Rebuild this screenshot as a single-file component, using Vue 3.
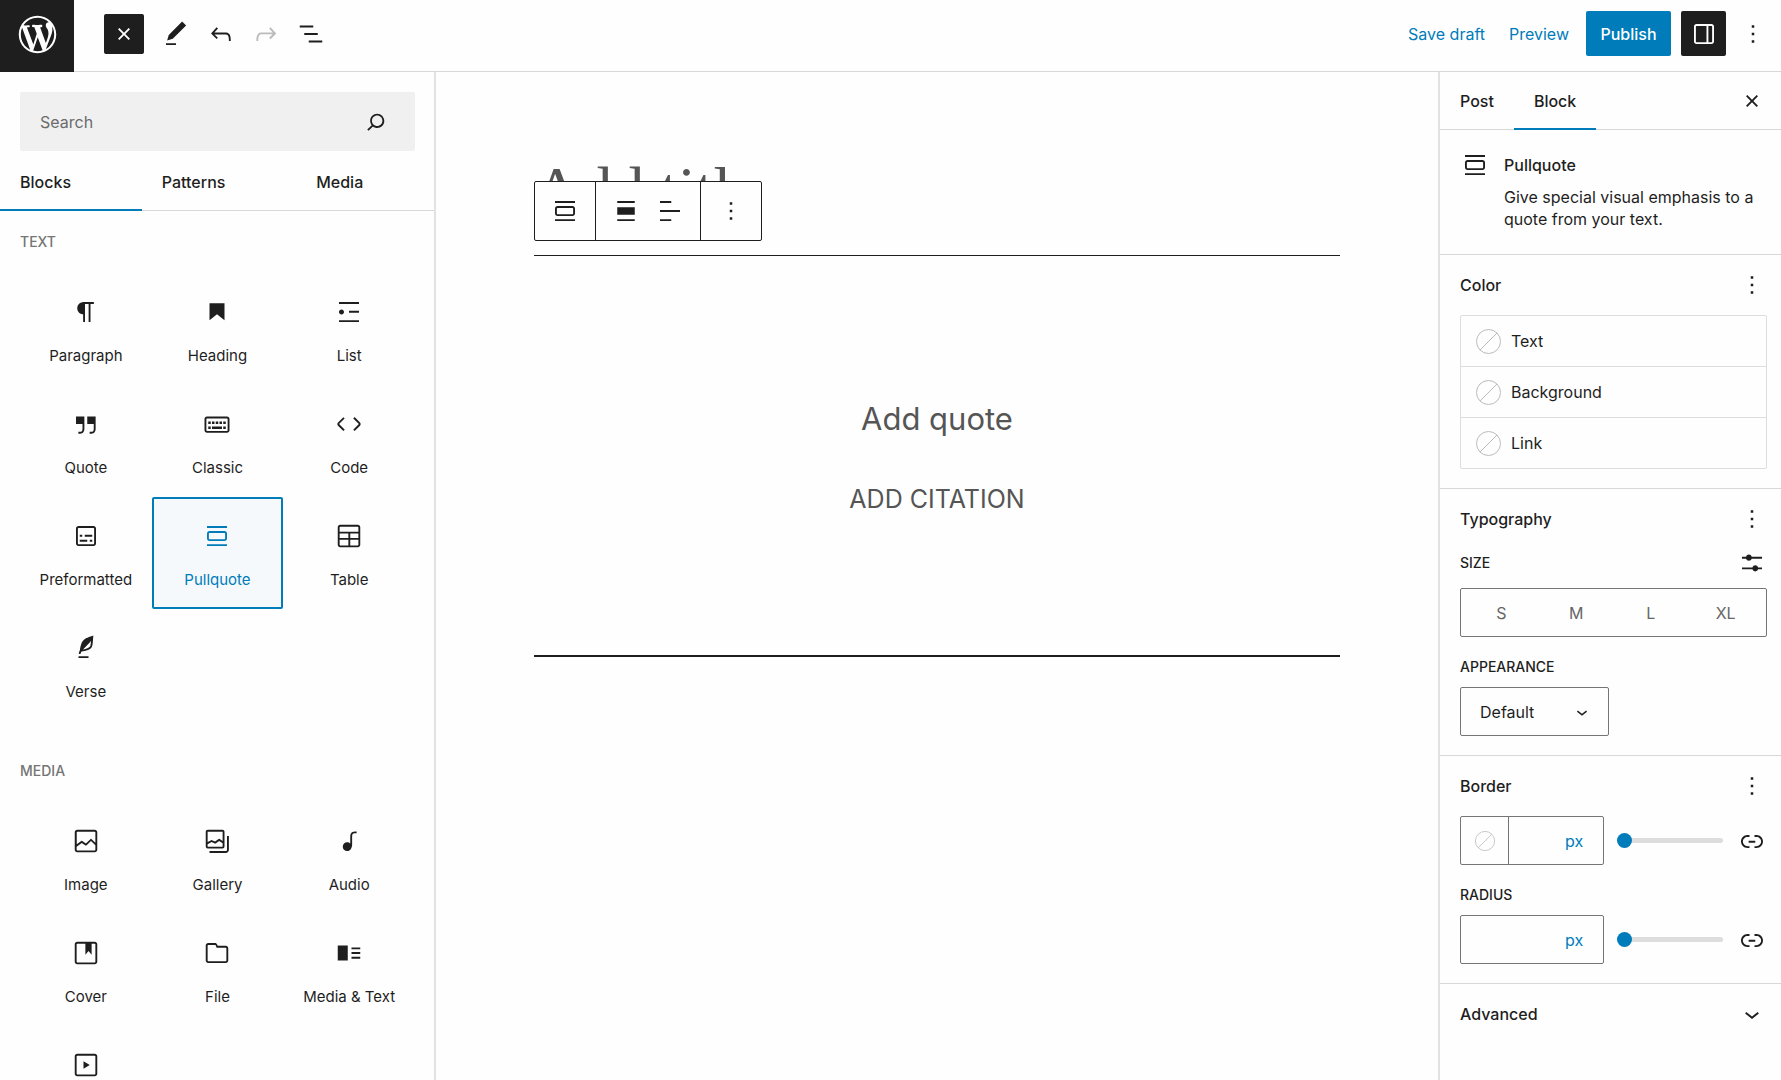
<script setup>
import { ref } from 'vue'

const icons = {
  wordpress: 'M20 10c0-5.51-4.49-10-10-10C4.48 0 0 4.49 0 10c0 5.52 4.48 10 10 10 5.51 0 10-4.48 10-10zM7.78 15.37L4.37 6.22c.55-.02 1.17-.08 1.17-.08.5-.06.44-1.13-.06-1.11 0 0-1.45.11-2.37.11-.18 0-.37 0-.58-.01C4.12 2.69 6.87 1.11 10 1.11c2.33 0 4.45.87 6.05 2.34-.68-.11-1.65.39-1.65 1.58 0 .74.45 1.36.9 2.1.35.61.55 1.36.55 2.46 0 1.49-1.4 5-1.4 5l-3.03-8.37c.54-.02.82-.17.82-.17.5-.05.44-1.25-.06-1.22 0 0-1.44.12-2.38.12-.87 0-2.33-.12-2.33-.12-.5-.03-.56 1.2-.06 1.22l.92.08 1.26 3.41zM17.41 10c.24-.64.74-1.87.43-4.25.7 1.29 1.05 2.71 1.05 4.25 0 3.29-1.73 6.24-4.4 7.78.97-2.59 1.94-5.2 2.92-7.78zM6.1 18.09C3.12 16.65 1.11 13.53 1.11 10c0-1.3.23-2.48.72-3.59C3.25 10.3 4.67 14.2 6.1 18.09zm4.03-6.63l2.58 6.98c-.86.29-1.76.45-2.71.45-.79 0-1.57-.11-2.29-.33.81-2.38 1.62-4.74 2.42-7.1z',
  close: 'M12 13.06l3.712 3.713 1.061-1.06L13.061 12l3.712-3.712-1.06-1.06L12 10.938 8.288 7.227l-1.061 1.06L10.939 12l-3.712 3.712 1.06 1.061L12 13.061z',
  edit: 'M20.1 5.1L16.9 2 6.2 12.7l-1.3 4.4 4.5-1.3L20.1 5.1zM4 20.8h8v-1.5H4v1.5z',
  undo: 'M18.3 11.7c-.6-.6-1.4-.9-2.3-.9H6.7l2.9-3.3-1.1-1-4.5 5L8.5 16l1-1-2.7-2.7H16c.5 0 .9.2 1.3.5 1 1 1 3.4 1 4.5v.3h1.5v-.2c0-1.5 0-4.3-1.5-5.7z',
  redo: 'M15.6 6.5l-1.1 1 2.9 3.3H8c-.9 0-1.7.3-2.3.9-1.4 1.5-1.4 4.2-1.4 5.6v.2h1.5v-.3c0-1.1 0-3.5 1-4.5.3-.3.7-.5 1.3-.5h9.2L14.5 15l1.1 1.1 4.6-4.6-4.6-5z',
  listView: 'M13.8 5.2H3v1.5h10.8V5.2zm-3.6 12v1.5H21v-1.5H10.2zm7.2-6H6.6v1.5h10.8v-1.5z',
  drawer: 'M18 4H6c-1.1 0-2 .9-2 2v12c0 1.1.9 2 2 2h12c1.1 0 2-.9 2-2V6c0-1.1-.9-2-2-2zm-4 14.5H6c-.3 0-.5-.2-.5-.5V6c0-.3.2-.5.5-.5h8v13zm4.5-.5c0 .3-.2.5-.5.5h-2.5v-13H18c.3 0 .5.2.5.5v12z',
  more: 'M13 19h-2v-2h2v2zm0-6h-2v-2h2v2zm0-6h-2V5h2v2z',
  search: 'M13 5c-3.3 0-6 2.7-6 6 0 1.4.5 2.7 1.3 3.7l-3.8 3.8 1.1 1.1 3.8-3.8c1 .8 2.3 1.3 3.7 1.3 3.3 0 6-2.7 6-6S16.3 5 13 5zm0 10.5c-2.5 0-4.5-2-4.5-4.5s2-4.5 4.5-4.5 4.5 2 4.5 4.5-2 4.5-4.5 4.5z',
  paragraph: 'M18.3 4H9.9v-.1l-.9.2c-2.3.4-4 2.4-4 4.8s1.7 4.4 4 4.8l.7.1V20h1.5V5.5h2.9V20h1.5V5.5h2.7V4z',
  heading: 'M6 5v13.6l6-4.8 6 4.8V5H6z',
  list: 'M4 4v1.5h16V4H4zm8 8.5h8V11h-8v1.5zM4 20h16v-1.5H4V20zm4-8c0-1.1-.9-2-2-2s-2 .9-2 2 .9 2 2 2 2-.9 2-2z',
  quote: 'M13 6v6h5.2v4c0 .8-.2 1.4-.5 1.7-.6.6-1.6.6-2.5.5h-.3v1.5h.5c1 0 2.3-.1 3.3-1 .6-.6 1-1.6 1-2.8V6H13zm-9 6h5.2v4c0 .8-.2 1.4-.5 1.7-.6.6-1.6.6-2.5.5h-.3v1.5h.5c1 0 2.3-.1 3.3-1 .6-.6 1-1.6 1-2.8V6H4v6z',
  classic: 'M20 6H4c-1.1 0-2 .9-2 2v9c0 1.1.9 2 2 2h16c1.1 0 2-.9 2-2V8c0-1.1-.9-2-2-2zm.5 11c0 .3-.2.5-.5.5H4c-.3 0-.5-.2-.5-.5V8c0-.3.2-.5.5-.5h16c.3 0 .5.2.5.5v9zM10 10H8v2h2v-2zm-5 2h2v-2H5v2zm8-2h-2v2h2v-2zm-5 6h8v-2H8v2zm6-4h2v-2h-2v2zm3 0h2v-2h-2v2zm0 4h2v-2h-2v2zM5 16h2v-2H5v2z',
  code: 'M20.8 10.7l-4.3-4.3-1.1 1.1 4.3 4.3c.1.1.1.3 0 .4l-4.3 4.3 1.1 1.1 4.3-4.3c.7-.8.7-1.9 0-2.6zM4.2 11.8l4.3-4.3-1-1-4.3 4.3c-.7.7-.7 1.8 0 2.5l4.3 4.3 1.1-1.1-4.3-4.3c-.2-.1-.2-.3-.1-.4z',
  preformatted: 'M18 4H6c-1.1 0-2 .9-2 2v12c0 1.1.9 2 2 2h12c1.1 0 2-.9 2-2V6c0-1.1-.9-2-2-2zm.5 14c0 .3-.2.5-.5.5H6c-.3 0-.5-.2-.5-.5V6c0-.3.2-.5.5-.5h12c.3 0 .5.2.5.5v12zM7 16.5h6V15H7v1.5zm4-4h6V11h-6v1.5zM9 11H7v1.5h2V11zm6 5.5h2V15h-2v1.5z',
  pullquote: 'M18 8H6c-1.1 0-2 .9-2 2v4c0 1.1.9 2 2 2h12c1.1 0 2-.9 2-2v-4c0-1.1-.9-2-2-2zm.5 6c0 .3-.2.5-.5.5H6c-.3 0-.5-.2-.5-.5v-4c0-.3.2-.5.5-.5h12c.3 0 .5.2.5.5v4zM4 4v1.5h16V4H4zm0 16h16v-1.5H4V20z',
  table: 'M19 3H5c-1.1 0-2 .9-2 2v14c0 1.1.9 2 2 2h14c1.1 0 2-.9 2-2V5c0-1.1-.9-2-2-2zM5 4.5h14c.3 0 .5.2.5.5v3.5h-15V5c0-.3.2-.5.5-.5zm8 5.5h6.5v3.5H13V10zm-1.5 3.5h-7V10h7v3.5zm-7 5.5v-4h7v4.5H5c-.3 0-.5-.2-.5-.5zm14.5.5h-6V15h6.5v4c0 .3-.2.5-.5.5z',
  verse: 'M17.8 2l-.9.3c-.1 0-3.6 1-5.2 2.1C10 5.5 9.3 6.5 8.9 7.1c-.6.9-1.7 4.7-1.7 6.3l-.9 2.3c-.2.4 0 .8.4 1 .1 0 .2.1.3.1.3 0 .6-.2.7-.5l.6-1.5c.3 0 .7-.1 1.2-.2.7-.1 1.4-.3 2.2-.5.8-.2 1.6-.5 2.4-.8.7-.3 1.4-.7 1.9-1.2s.8-1.2 1-1.9c.2-.7.3-1.6.4-2.4.1-.8.1-1.7.2-2.5 0-.8.1-1.5.2-2.1V2zm-1.9 5.6c-.1.8-.2 1.5-.3 2.1-.2.6-.4 1-.6 1.3-.3.3-.8.6-1.4.9-.7.3-1.4.5-2.2.8-.6.2-1.3.3-1.8.4L15 7.5c.3-.3.6-.7 1-1.1 0 .4 0 .8-.1 1.2zM6 20h8v-1.5H6V20z',
  image: 'M19 3H5c-1.1 0-2 .9-2 2v14c0 1.1.9 2 2 2h14c1.1 0 2-.9 2-2V5c0-1.1-.9-2-2-2zM5 4.5h14c.3 0 .5.2.5.5v8.4l-3-2.9c-.3-.3-.8-.3-1 0L11.9 14 9 12c-.3-.2-.6-.2-.8 0l-3.6 2.6V5c-.1-.3.1-.5.4-.5zm14 15H5c-.3 0-.5-.2-.5-.5v-2.4l4.1-3 3 1.9c.3.2.7.2.9-.1L16 12l3.5 3.4V19c0 .3-.2.5-.5.5z',
  gallery: 'M16.375 4.5H4.625a.125.125 0 0 0-.125.125v8.254l2.859-1.54a.75.75 0 0 1 .68-.016l2.384 1.142 2.89-2.074a.75.75 0 0 1 .874 0l2.313 1.66V4.625a.125.125 0 0 0-.125-.125Zm.125 9.398-2.75-1.975-2.813 2.02a.75.75 0 0 1-.76.067l-2.444-1.17L4.5 14.583v1.792c0 .069.056.125.125.125h11.75a.125.125 0 0 0 .125-.125v-2.477ZM4.625 3C3.728 3 3 3.728 3 4.625v11.75C3 17.273 3.728 18 4.625 18h11.75c.898 0 1.625-.727 1.625-1.625V4.625C18 3.728 17.273 3 16.375 3H4.625ZM20 8v11c0 .69-.31 1-.999 1H6v1.5h13.001c1.52 0 2.499-.982 2.499-2.5V8H20Z',
  audio: 'M17.7 4.3c-1.2 0-2.8 0-3.8 1-.6.6-.9 1.5-.9 2.6V14c-.6-.6-1.5-1-2.5-1C8.6 13 7 14.6 7 16.5S8.6 20 10.5 20c1.5 0 2.8-1 3.3-2.3.5-.8.7-1.8.7-2.5V7.9c0-.7.2-1.2.5-1.6.6-.6 1.8-.6 2.8-.6h.3V4.3h-.4z',
  cover: 'M19 3H5c-1.1 0-2 .9-2 2v14c0 1.1.9 2 2 2h14c1.1 0 2-.9 2-2V5c0-1.1-.9-2-2-2zm.5 16c0 .3-.2.5-.5.5H5c-.3 0-.5-.2-.5-.5V5c0-.3.2-.5.5-.5h6.5v8.9l2.500-3.100 2.500 3.100V4.500H19c.3 0 .5.2.5.5v14z',
  file: 'M19 6.200h-6.400l-.4-.9C11.900 4.500 11.200 4 10.400 4H5c-1.100 0-2 .9-2 2v12c0 1.100.9 2 2 2h14c1.100 0 2-.9 2-2V8.200c0-1.100-.9-2-2-2zm.5 11.800c0 .3-.2.5-.5.5H5c-.3 0-.5-.2-.5-.5V6c0-.3.2-.5.5-.5h5.400c.2 0 .4.100.5.300l.8 1.900H19c.3 0 .5.2.5.5V18z',
  mediaText: 'M3 6h8v12H3V6zm11 1.500h7V9h-7V7.500zm0 3.750h7v1.500h-7v-1.500zM14 15h7v1.500h-7V15z',
  video: 'M19 3H5c-1.100 0-2 .9-2 2v14c0 1.100.9 2 2 2h14c1.100 0 2-.9 2-2V5c0-1.100-.9-2-2-2zm.5 16c0 .3-.2.5-.5.5H5c-.3 0-.5-.2-.5-.5V5c0-.3.2-.5.5-.5h14c.3 0 .5.2.5.5v14zM10 15l5-3-5-3v6z',
  alignNone: 'M19 5.500H5V4h14v1.500ZM19 20H5v-1.500h14V20ZM5 9h14v6H5V9Z',
  alignLeft: 'M13 5.500H4V4h9v1.500Zm7 7.200H4v-1.500h16v1.500ZM13 20H4v-1.500h9V20Z',
  sliders: 'M4 7h3.200a2.400 2.400 0 0 1 4.600 0H20v1.500h-8.200a2.400 2.400 0 0 1-4.600 0H4V7zm0 8.500h8.300a2.400 2.400 0 0 1 4.600 0H20V17h-3.100a2.400 2.400 0 0 1-4.600 0H4v-1.500z',
  link: 'M15.6 7.2H14v1.5h1.6c2 0 3.7 1.7 3.7 3.700s-1.700 3.700-3.700 3.700H14v1.500h1.600c2.800 0 5.200-2.300 5.200-5.200 0-2.900-2.300-5.200-5.200-5.200zM4.700 12.400c0-2 1.700-3.700 3.700-3.700H10V7.200H8.400c-2.900 0-5.200 2.300-5.200 5.200 0 2.900 2.300 5.200 5.200 5.200H10v-1.500H8.400c-2 0-3.700-1.700-3.700-3.700zm4.600.9h5.300v-1.500H9.300v1.500z',
  chevron: 'M17.5 11.600L12 16l-5.500-4.400.9-1.200L12 14l4.500-3.600 1 1.200z'
}

const sections = [
  {
    title: 'Text',
    blocks: [
      ['Paragraph', 'paragraph'], ['Heading', 'heading'], ['List', 'list'],
      ['Quote', 'quote'], ['Classic', 'classic'], ['Code', 'code'],
      ['Preformatted', 'preformatted'], ['Pullquote', 'pullquote'], ['Table', 'table'],
      ['Verse', 'verse']
    ]
  },
  {
    title: 'Media',
    blocks: [
      ['Image', 'image'], ['Gallery', 'gallery'], ['Audio', 'audio'],
      ['Cover', 'cover'], ['File', 'file'], ['Media & Text', 'mediaText'],
      ['Video', 'video']
    ]
  }
]
const libraryTabs = ['Blocks', 'Patterns', 'Media']
const colors = ['Text', 'Background', 'Link']
const sizes = ['S', 'M', 'L', 'XL']

const selected = ref('Pullquote')
const borderWidth = ref(0)
const radius = ref(0)
</script>

<template>
  <div class="editor">
    <header class="topbar">
      <a class="logo" href="#" aria-label="View posts">
        <svg viewBox="-2 -2 24 24"><path :d="icons.wordpress" /></svg>
      </a>
      <div class="tools">
        <button class="inserter" aria-label="Toggle block inserter"><svg class="icon" viewBox="0 0 24 24"><path :d="icons.close" /></svg></button>
        <button class="tool" aria-label="Tools"><svg class="icon" viewBox="0 0 24 24"><path :d="icons.edit" /></svg></button>
        <button class="tool" aria-label="Undo"><svg class="icon" viewBox="0 0 24 24"><path :d="icons.undo" /></svg></button>
        <button class="tool" aria-label="Redo" disabled><svg class="icon" viewBox="0 0 24 24"><path :d="icons.redo" /></svg></button>
        <button class="tool" aria-label="Document overview"><svg class="icon" viewBox="0 0 24 24"><path :d="icons.listView" /></svg></button>
      </div>
      <div class="actions">
        <button class="text-button">Save draft</button>
        <button class="text-button">Preview</button>
        <button class="publish">Publish</button>
        <button class="toggle" aria-label="Settings"><svg class="icon" viewBox="0 0 24 24"><path :d="icons.drawer" /></svg></button>
        <button class="icon-button" aria-label="Options"><svg class="icon" viewBox="0 0 24 24"><path :d="icons.more" /></svg></button>
      </div>
    </header>

    <div class="body">
      <aside class="library">
        <div class="search">
          <input type="search" placeholder="Search" aria-label="Search for blocks and patterns">
          <button class="search-button" aria-label="Search"><svg viewBox="0 0 24 24"><path :d="icons.search" /></svg></button>
        </div>
        <div class="library-tabs" role="tablist">
          <button v-for="(tab, i) in libraryTabs" :key="tab" role="tab" :class="{ active: i === 0 }">{{ tab }}</button>
        </div>
        <section v-for="section in sections" :key="section.title" class="block-section">
          <h2>{{ section.title }}</h2>
          <div class="block-grid">
            <button
              v-for="[name, icon] in section.blocks"
              :key="name"
              class="block"
              :class="{ selected: name === selected }"
              @click="selected = name"
            >
              <svg class="icon" viewBox="0 0 24 24"><path :d="icons[icon]" /></svg>
              <span>{{ name }}</span>
            </button>
          </div>
        </section>
      </aside>

      <main class="canvas">
        <div class="content">
          <h1 class="title">Add title</h1>
          <figure class="pullquote">
            <div class="block-toolbar" role="toolbar" aria-label="Block tools">
              <div class="group">
                <button aria-label="Pullquote"><svg class="icon" viewBox="0 0 24 24"><path :d="icons.pullquote" /></svg></button>
              </div>
              <div class="group">
                <button aria-label="Align"><svg class="icon" viewBox="0 0 24 24"><path :d="icons.alignNone" /></svg></button>
                <button aria-label="Align text"><svg class="icon" viewBox="0 0 24 24"><path :d="icons.alignLeft" /></svg></button>
              </div>
              <div class="group">
                <button aria-label="Options"><svg class="icon" viewBox="0 0 24 24"><path :d="icons.more" /></svg></button>
              </div>
            </div>
            <blockquote>
              <p>Add quote</p>
              <cite>Add citation</cite>
            </blockquote>
          </figure>
        </div>
      </main>

      <aside class="settings">
        <div class="settings-tabs">
          <div role="tablist">
            <button role="tab">Post</button>
            <button role="tab" class="active">Block</button>
          </div>
          <button class="icon-button" aria-label="Close settings"><svg class="icon" viewBox="0 0 24 24"><path :d="icons.close" /></svg></button>
        </div>

        <section class="card">
          <svg class="icon" viewBox="0 0 24 24"><path :d="icons.pullquote" /></svg>
          <div>
            <h2>Pullquote</h2>
            <p>Give special visual emphasis to a quote from your text.</p>
          </div>
        </section>

        <section class="panel">
          <div class="panel-head">
            <h2>Color</h2>
            <button class="icon-button" aria-label="Color options"><svg class="icon" viewBox="0 0 24 24"><path :d="icons.more" /></svg></button>
          </div>
          <div class="color-list">
            <button v-for="color in colors" :key="color">
              <svg class="swatch" viewBox="0 0 25 25"><circle cx="12.500" cy="12.500" r="12" /><path d="M4 21L21 4" /></svg>
              {{ color }}
            </button>
          </div>
        </section>

        <section class="panel">
          <div class="panel-head">
            <h2>Typography</h2>
            <button class="icon-button" aria-label="Typography options"><svg class="icon" viewBox="0 0 24 24"><path :d="icons.more" /></svg></button>
          </div>
          <div class="label-row">
            <h3>Size</h3>
            <button class="icon-button" aria-label="Set custom size"><svg class="icon" viewBox="0 0 24 24"><path :d="icons.sliders" /></svg></button>
          </div>
          <div class="sizes" role="group" aria-label="Size">
            <button v-for="size in sizes" :key="size">{{ size }}</button>
          </div>
          <label class="caption" for="appearance">Appearance</label>
          <div class="select">
            <select id="appearance"><option>Default</option></select>
            <svg viewBox="0 0 24 24"><path :d="icons.chevron" /></svg>
          </div>
        </section>

        <section class="panel">
          <div class="panel-head">
            <h2>Border</h2>
            <button class="icon-button" aria-label="Border options"><svg class="icon" viewBox="0 0 24 24"><path :d="icons.more" /></svg></button>
          </div>
          <div class="control-row">
            <div class="unit-box">
              <button class="border-color" aria-label="Border color">
                <svg class="swatch small" viewBox="0 0 25 25"><circle cx="12.500" cy="12.500" r="12" /><path d="M4 21L21 4" /></svg>
              </button>
              <input type="text" aria-label="Border width">
              <select aria-label="Border width unit"><option>px</option></select>
            </div>
            <input v-model="borderWidth" type="range" min="0" max="100" aria-label="Border width slider">
            <button class="icon-button" aria-label="Unlink sides"><svg class="icon" viewBox="0 0 24 24"><path :d="icons.link" /></svg></button>
          </div>
          <label class="caption" for="radius">Radius</label>
          <div class="control-row">
            <div class="unit-box">
              <input id="radius" type="text">
              <select aria-label="Radius unit"><option>px</option></select>
            </div>
            <input v-model="radius" type="range" min="0" max="100" aria-label="Radius slider">
            <button class="icon-button" aria-label="Unlink radii"><svg class="icon" viewBox="0 0 24 24"><path :d="icons.link" /></svg></button>
          </div>
        </section>

        <section class="panel">
          <div class="panel-head">
            <h2>Advanced</h2>
            <button class="icon-button" aria-label="Expand advanced"><svg class="icon" viewBox="0 0 24 24"><path :d="icons.chevron" /></svg></button>
          </div>
        </section>
      </aside>
    </div>
  </div>
</template>

<style>
body {
  background: #fefefe;
}
</style>

<style scoped>
.editor {
  display: flex;
  flex-direction: column;
  height: 100vh;
  overflow: hidden;
  color: #1e1e1e;
  font: 16px/22px Inter, "Liberation Sans", sans-serif;
}
.editor * {
  box-sizing: border-box;
}
h1, h2, h3, p, figure, blockquote {
  margin: 0;
}
h2 {
  font-size: 16px;
  font-weight: 500;
}
button {
  display: flex;
  align-items: center;
  justify-content: center;
  padding: 0;
  border: 0;
  background: none;
  color: inherit;
  font: inherit;
  cursor: pointer;
}
input, select {
  min-width: 0;
  margin: 0;
  padding: 0;
  border: 0;
  background: none;
  color: inherit;
  font: inherit;
  appearance: none;
}
svg {
  flex: none;
  fill: currentColor;
  fill-rule: evenodd;
}
.icon {
  width: 30px;
  height: 30px;
}
.icon-button {
  width: 30px;
  height: 30px;
}

/* Top bar */
.topbar {
  display: flex;
  flex: none;
  height: 72px;
  border-bottom: 1px solid #d8d8d8;
}
.logo {
  display: flex;
  justify-content: center;
  width: 74px;
  height: 72px;
  padding-top: 12px;
  background: #1e1e1e;
  color: #fff;
}
.logo svg {
  width: 45px;
  height: 45px;
}
.tools, .actions {
  display: flex;
  align-items: center;
  height: 67px;
}
.tools {
  margin-left: 30px;
}
.inserter {
  width: 40px;
  height: 40px;
  margin-right: 9px;
  border-radius: 2px;
  background: #1e1e1e;
  color: #fff;
}
.tool {
  width: 45px;
  height: 45px;
}
.tool:disabled {
  color: #bbb;
}
.actions {
  gap: 10px;
  margin-left: auto;
  padding-right: 13px;
}
.text-button {
  padding: 0 7px;
  color: #007cba;
}
.publish {
  width: 85px;
  height: 45px;
  border-radius: 2px;
  background: #007cba;
  color: #fff;
  font-weight: 500;
}
.toggle {
  width: 45px;
  height: 45px;
  border-radius: 2px;
  background: #1e1e1e;
  color: #fff;
}
.actions .icon-button {
  margin-left: 2px;
}

.body {
  display: flex;
  flex: 1;
  min-height: 0;
}

/* Block library */
.library {
  flex: none;
  width: 436px;
  overflow-y: auto;
  border-right: 2px solid #e2e2e2;
  scrollbar-width: none;
}
.search {
  display: flex;
  align-items: center;
  height: 59px;
  margin: 20px 19px 0 20px;
  padding: 0 25px 0 20px;
  border-radius: 2px;
  background: #f0f0f0;
}
.search input {
  flex: 1;
}
.search input::placeholder {
  color: #6b6b6b;
  opacity: 1;
}
.search-button {
  width: 28px;
  height: 28px;
}
.search-button svg {
  width: 28px;
  height: 28px;
}
.library-tabs {
  display: flex;
  height: 60px;
  border-bottom: 1px solid #d8d8d8;
}
.library-tabs button {
  flex: 1 1 auto;
  justify-content: flex-start;
  height: 60px;
  padding: 4px 20px 0;
  border-bottom: 2px solid transparent;
  font-weight: 500;
}
.library-tabs .active {
  border-bottom-color: #007cba;
}
.block-section {
  padding: 21px 19px 19px 20px;
}
.block-section h2 {
  margin-bottom: 21px;
  color: #757575;
  font-size: 14px;
  line-height: 20px;
  text-transform: uppercase;
}
.block-grid {
  display: grid;
  grid-template-columns: repeat(3, 1fr);
}
.block {
  flex-direction: column;
  justify-content: flex-start;
  gap: 19px;
  height: 112px;
  padding-top: 24px;
  border-radius: 2px;
  font-size: 15px;
  line-height: 20px;
  white-space: nowrap;
}
.block.selected {
  background: #f5f9fc;
  box-shadow: inset 0 0 0 2px #007cba;
  color: #007cba;
}

/* Canvas */
.canvas {
  flex: 1;
  min-width: 0;
  padding: 78px 98px 0;
}
.content {
  max-width: 807px;
  margin: 0 auto;
}
.title {
  height: 105px;
  color: #555;
  font: 400 64px/80px "Liberation Serif", serif;
}
.pullquote {
  position: relative;
  border-top: 1px solid #1e1e1e;
  border-bottom: 2px solid #1e1e1e;
}
.block-toolbar {
  position: absolute;
  bottom: calc(100% + 15px);
  left: 0;
  display: flex;
  height: 60px;
  border: 1px solid #1e1e1e;
  border-radius: 2px;
  background: #fefefe;
}
.group {
  display: flex;
  padding: 0 8px;
}
.group + .group {
  border-left: 1px solid #1e1e1e;
}
.group button {
  width: 44px;
}
blockquote {
  display: flex;
  flex-direction: column;
  align-items: center;
  gap: 42px;
  padding: 140px 0;
  color: #555;
  text-align: center;
}
blockquote p {
  font-size: 31px;
  line-height: 45px;
}
cite {
  font-size: 25px;
  font-style: normal;
  line-height: 32px;
  text-transform: uppercase;
}

/* Settings sidebar */
.settings {
  flex: none;
  width: 343px;
  overflow: hidden;
  border-left: 2px solid #e2e2e2;
}
.settings-tabs {
  display: flex;
  justify-content: space-between;
  height: 58px;
  padding-right: 14px;
  border-bottom: 1px solid #d8d8d8;
}
.settings-tabs > div {
  display: flex;
}
.settings-tabs [role="tab"] {
  height: 58px;
  padding: 2px 20px 0;
  border-bottom: 2px solid transparent;
  font-weight: 500;
}
.settings-tabs .active {
  border-bottom-color: #007cba;
}
.settings-tabs .icon-button {
  align-self: center;
}
.card {
  display: flex;
  gap: 14px;
  padding: 24px 20px;
}
.card .icon {
  margin-top: -4px;
}
.card h2 {
  margin-bottom: 10px;
}
.panel {
  padding: 15px 14px 19px 20px;
  border-top: 1px solid #d8d8d8;
}
.panel-head, .label-row {
  display: flex;
  align-items: center;
  justify-content: space-between;
}
.panel-head {
  height: 30px;
}
.label-row {
  height: 30px;
  margin: 14px 0 10px;
}
h3, .caption {
  font-size: 14px;
  font-weight: 500;
  line-height: 20px;
  text-transform: uppercase;
}
.caption {
  display: block;
  margin: 20px 0 10px;
}
.color-list {
  margin-top: 15px;
  border: 1px solid #ddd;
  border-radius: 2px;
}
.color-list button {
  justify-content: flex-start;
  gap: 10px;
  width: 100%;
  height: 50px;
  padding-left: 15px;
}
.color-list button + button {
  height: 51px;
  border-top: 1px solid #ddd;
}
.swatch {
  width: 25px;
  height: 25px;
  fill: none;
  stroke: #bbb;
}
.swatch.small {
  width: 20px;
  height: 20px;
}
.sizes {
  display: flex;
  height: 49px;
  padding: 0 3px;
  border: 1px solid #757575;
  border-radius: 2px;
  color: #666;
}
.sizes button {
  flex: 1;
}
.select {
  display: grid;
  align-items: center;
  width: 149px;
  height: 49px;
  border: 1px solid #757575;
  border-radius: 2px;
}
.select > * {
  grid-area: 1 / 1;
}
.select select {
  height: 47px;
  padding-left: 19px;
}
.select svg {
  justify-self: end;
  width: 22px;
  height: 22px;
  margin-right: 15px;
  pointer-events: none;
}
.control-row {
  display: flex;
  align-items: center;
}
.panel-head + .control-row {
  margin-top: 15px;
}
.unit-box {
  display: flex;
  width: 144px;
  height: 49px;
  padding-right: 19px;
  border: 1px solid #757575;
  border-radius: 2px;
}
.unit-box input {
  flex: 1;
}
.unit-box select {
  color: #007cba;
}
.border-color {
  width: 48px;
  border-right: 1px solid #757575;
}
input[type="range"] {
  flex: 1;
  height: 15px;
  margin: 0 14px 0 13px;
}
input[type="range"]::-webkit-slider-runnable-track {
  height: 5px;
  border-radius: 3px;
  background: #ddd;
}
input[type="range"]::-webkit-slider-thumb {
  width: 15px;
  height: 15px;
  margin-top: -5px;
  border-radius: 50%;
  background: #007cba;
  appearance: none;
}
</style>
